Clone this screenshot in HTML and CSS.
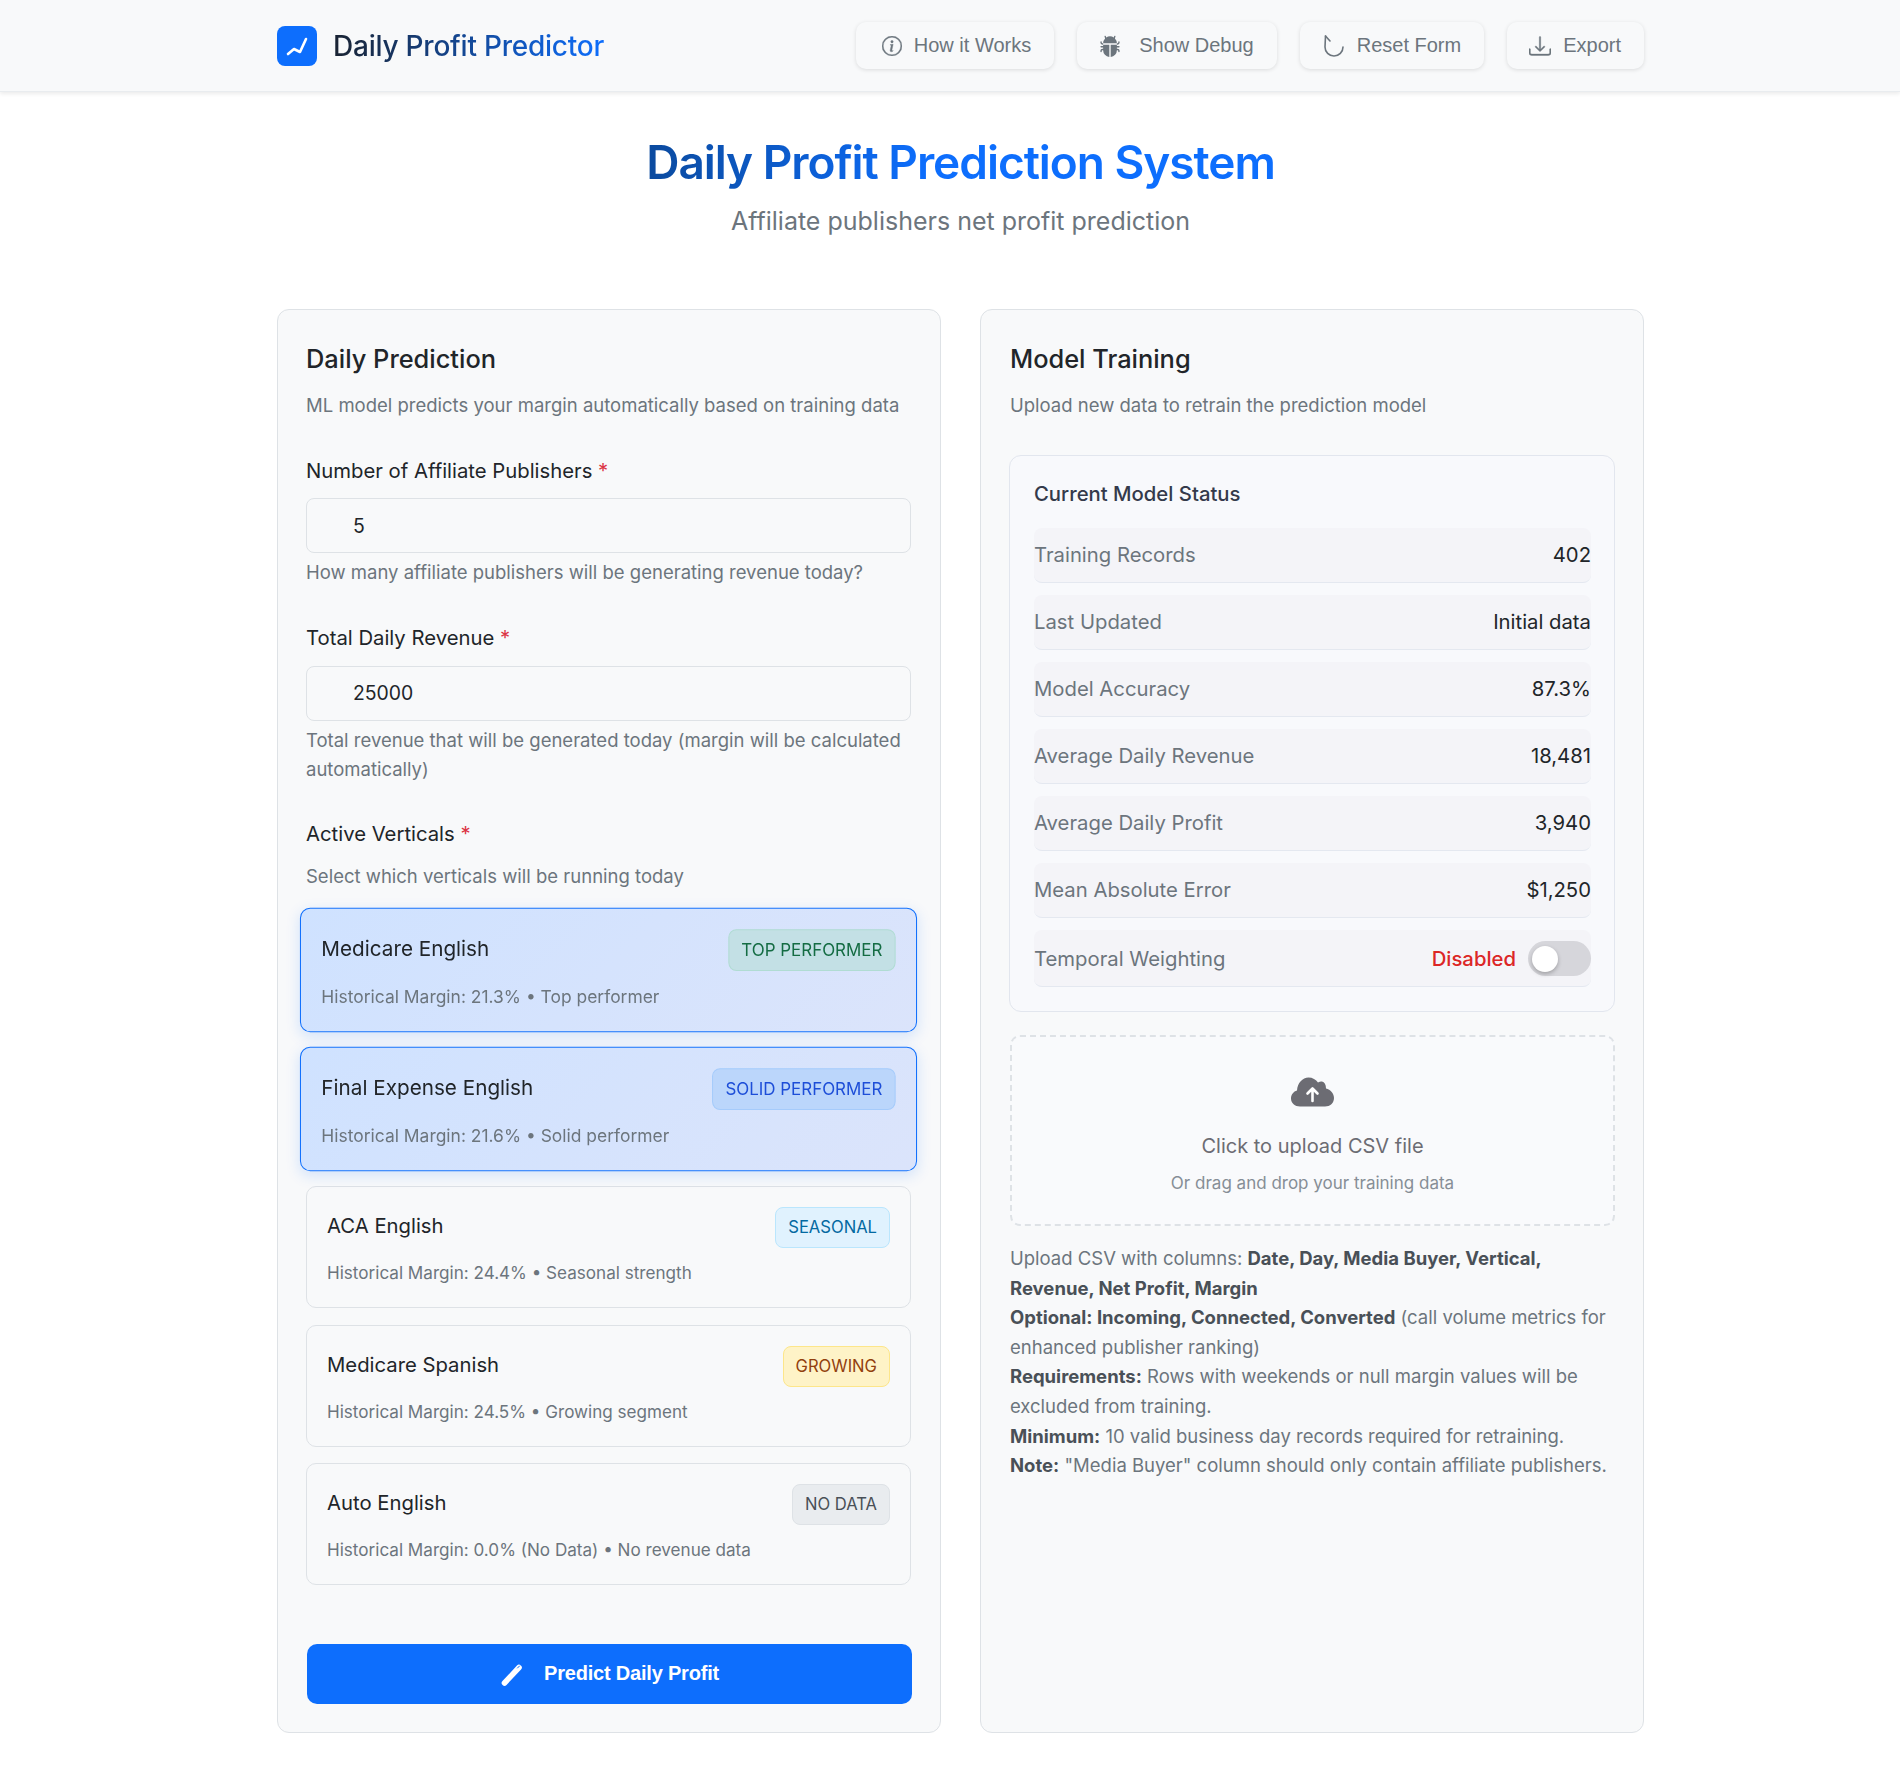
FILE: index.html
```html
<!DOCTYPE html>
<html>
<head>
  <meta charset="UTF-8">
  <title>Daily Profit Predictor</title>
  <link rel="stylesheet" href="styles.css">
</head>
<body>

  <header class="topbar">
    <div class="topbar-inner">
      <div class="brand">
        <span class="brand-icon">
          <svg viewBox="0 0 40 40" width="40" height="40" fill="none" stroke="#fff" stroke-width="2.6" stroke-linecap="round" stroke-linejoin="round"><path d="M11 28 L17 23 L23 26 L29 13"/></svg>
        </span>
        <span class="brand-name">Daily Profit Predictor</span>
      </div>
      <nav class="top-actions">
        <button class="top-btn btn-how">
          <svg viewBox="0 0 16 16" width="20" height="20" fill="currentColor" stroke="currentColor" stroke-width=".3"><path d="M8 15A7 7 0 1 1 8 1a7 7 0 0 1 0 14zm0 1A8 8 0 1 0 8 0a8 8 0 0 0 0 16z"/><path d="m8.93 6.588-2.29.287-.082.38.45.083c.294.07.352.176.288.469l-.738 3.468c-.194.897.105 1.319.808 1.319.545 0 1.178-.252 1.465-.598l.088-.416c-.2.176-.492.246-.686.246-.275 0-.375-.193-.304-.533L8.93 6.588zM9 4.5a1 1 0 1 1-2 0 1 1 0 0 1 2 0z"/></svg>
          How it Works
        </button>
        <button class="top-btn btn-debug">
          <svg viewBox="0 0 16 16" width="22" height="22" fill="currentColor"><path d="M4.978.855a.5.5 0 1 0-.956.29l.41 1.352A4.985 4.985 0 0 0 3 6h10a4.985 4.985 0 0 0-1.432-3.503l.41-1.352a.5.5 0 1 0-.956-.29l-.291.956A4.978 4.978 0 0 0 8 1a4.979 4.979 0 0 0-2.731.811l-.29-.956z"/><path d="M13 6v1H8.5v8.975A5 5 0 0 0 13 11h.5a.5.5 0 0 1 .5.5v.5a.5.5 0 1 0 1 0v-.5a1.5 1.5 0 0 0-1.5-1.5H13V9h1.5a.5.5 0 0 0 0-1H13V7h.5A1.5 1.5 0 0 0 15 5.5V5a.5.5 0 0 0-1 0v.5a.5.5 0 0 1-.5.5H13zm-5.5 9.975V7H3V6h-.5a.5.5 0 0 1-.5-.5V5a.5.5 0 0 0-1 0v.5A1.5 1.5 0 0 0 2.5 7H3v1H1.5a.5.5 0 0 0 0 1H3v1h-.5A1.5 1.5 0 0 0 1 11.5v.5a.5.5 0 1 0 1 0v-.5a.5.5 0 0 1 .5-.5H3a5 5 0 0 0 4.500 4.975z"/></svg>
          Show Debug
        </button>
        <button class="top-btn">
          <svg viewBox="0 0 22 24" width="22" height="24" fill="none" stroke="currentColor" stroke-width="1.6" stroke-linecap="round"><path d="M2.500 2 L2 13 A9 9 0 0 0 20 13"/><path d="M2.500 2 L7 7"/></svg>
          Reset Form
        </button>
        <button class="top-btn btn-export">
          <svg viewBox="0 0 16 16" width="22" height="22" fill="currentColor" stroke="currentColor" stroke-width=".3"><path d="M.5 9.9a.5.5 0 0 1 .5.5v2.5a1 1 0 0 0 1 1h12a1 1 0 0 0 1-1v-2.5a.5.5 0 0 1 1 0v2.5a2 2 0 0 1-2 2H2a2 2 0 0 1-2-2v-2.5a.5.5 0 0 1 .5-.5z"/><path d="M7.646 11.854a.5.5 0 0 0 .708 0l3-3a.5.5 0 0 0-.708-.708L8.5 10.293V1.5a.5.5 0 0 0-1 0v8.793L5.354 8.146a.5.5 0 1 0-.708.708l3 3z"/></svg>
          Export
        </button>
      </nav>
    </div>
  </header>

  <main class="page">
    <section class="hero">
      <h1>Daily Profit Prediction System</h1>
      <p>Affiliate publishers net profit prediction</p>
    </section>

    <div class="columns">
      <section class="card">
        <h2>Daily Prediction</h2>
        <p class="card-sub">ML model predicts your margin automatically based on training data</p>

        <div class="field">
          <label>Number of Affiliate Publishers <span class="req">*</span></label>
          <input class="text-input" type="text" value="5">
          <p class="help">How many affiliate publishers will be generating revenue today?</p>
        </div>

        <div class="field">
          <label>Total Daily Revenue <span class="req">*</span></label>
          <input class="text-input" type="text" value="25000">
          <p class="help">Total revenue that will be generated today (margin will be calculated automatically)</p>
        </div>

        <div class="field-verticals">
          <label>Active Verticals <span class="req">*</span></label>
          <p class="help verticals-help">Select which verticals will be running today</p>
        </div>

        <div class="verticals">
          <div class="vertical selected">
            <div class="vertical-top"><span class="vertical-name">Medicare English</span><span class="tag tag-top">TOP PERFORMER</span></div>
            <div class="vertical-meta">Historical Margin: 21.3% • Top performer</div>
          </div>
          <div class="vertical selected">
            <div class="vertical-top"><span class="vertical-name">Final Expense English</span><span class="tag tag-solid">SOLID PERFORMER</span></div>
            <div class="vertical-meta">Historical Margin: 21.6% • Solid performer</div>
          </div>
          <div class="vertical">
            <div class="vertical-top"><span class="vertical-name">ACA English</span><span class="tag tag-seasonal">SEASONAL</span></div>
            <div class="vertical-meta">Historical Margin: 24.4% • Seasonal strength</div>
          </div>
          <div class="vertical">
            <div class="vertical-top"><span class="vertical-name">Medicare Spanish</span><span class="tag tag-growing">GROWING</span></div>
            <div class="vertical-meta">Historical Margin: 24.5% • Growing segment</div>
          </div>
          <div class="vertical">
            <div class="vertical-top"><span class="vertical-name">Auto English</span><span class="tag tag-none">NO DATA</span></div>
            <div class="vertical-meta">Historical Margin: 0.0% (No Data) • No revenue data</div>
          </div>
        </div>

        <button class="predict-btn">
          <svg viewBox="0 0 24 24" width="24" height="24" fill="none" stroke-linecap="round"><path d="M4.500 21 L19 5.500" stroke="#fff" stroke-width="5.600"/><path d="M17.500 6 L19.500 4" stroke="#0d6efd" stroke-width="1"/></svg>
          Predict Daily Profit
        </button>
      </section>

      <section class="card card-right">
        <h2>Model Training</h2>
        <p class="card-sub">Upload new data to retrain the prediction model</p>

        <div class="status">
          <h3>Current Model Status</h3>
          <div class="status-row"><span>Training Records</span><b>402</b></div>
          <div class="status-row"><span>Last Updated</span><b>Initial data</b></div>
          <div class="status-row"><span>Model Accuracy</span><b>87.3%</b></div>
          <div class="status-row"><span>Average Daily Revenue</span><b>18,481</b></div>
          <div class="status-row"><span>Average Daily Profit</span><b>3,940</b></div>
          <div class="status-row"><span>Mean Absolute Error</span><b>$1,250</b></div>
          <div class="status-row status-toggle">
            <span>Temporal Weighting</span>
            <div class="toggle-wrap"><b class="off">Disabled</b><span class="toggle"></span></div>
          </div>
        </div>

        <div class="upload">
          <svg viewBox="0 0 43 30" width="43" height="30"><path fill="#6c6c73" d="M9 29.500 C4 29.500 0 26 0 21.500 C0 17.500 2.500 14.500 6 13.500 C6.500 6 11.500 .5 17.500 .5 C21.500 .5 25 2.500 27 5.500 C28.500 4.500 30 4.200 31 4.500 C33.500 5 35 7.500 35 11.500 C39.500 12.500 43 16.500 43 21 C43 26 39 29.500 34 29.500 Z"/><path fill="none" stroke="#fff" stroke-width="2.600" stroke-linecap="round" stroke-linejoin="round" d="M21.500 24 V11.500 M16.500 16.500 L21.500 11.500 L26.500 16.500"/></svg>
          <div class="upload-title">Click to upload CSV file</div>
          <div class="upload-sub">Or drag and drop your training data</div>
        </div>

        <p class="notes">
          Upload CSV with columns: <b>Date, Day, Media Buyer, Vertical, Revenue, Net Profit, Margin</b><br>
          <b>Optional: Incoming, Connected, Converted</b> (call volume metrics for enhanced publisher ranking)<br>
          <b>Requirements:</b> Rows with weekends or null margin values will be excluded from training.<br>
          <b>Minimum:</b> 10 valid business day records required for retraining.<br>
          <b>Note:</b> "Media Buyer" column should only contain affiliate publishers.
        </p>
      </section>
    </div>
  </main>

</body>
</html>
```

FILE: styles.css
```css
* { box-sizing: border-box; }
html, body { margin: 0; padding: 0; }
body { font-family: Inter, "Liberation Sans", sans-serif; background: #fff; color: #212529; font-size: 18.5px; }

.topbar { height: 92px; background: #f8f9fa; border-bottom: 1px solid #e9ecef; box-shadow: 0 2px 4px rgba(0,0,0,0.08); }
.topbar-inner { height: 100%; margin-left: 277px; width: 1367px; display: flex; align-items: center; justify-content: space-between; }
.brand { display: flex; align-items: center; gap: 16px; }
.brand-icon { width: 40px; height: 40px; border-radius: 8px; background: #0d6efd; display: flex; }
.brand-name { font-size: 28px; font-weight: 500; letter-spacing: -0.23px; background: linear-gradient(90deg, #1a2332 0%, #0d6efd 100%); -webkit-background-clip: text; background-clip: text; color: transparent; }
.top-actions { display: flex; gap: 23px; }
.top-btn { height: 47px; padding: 0 23px; border: 0; border-radius: 10px; background: #f8f9fa; color: #6c757d; font-family: "Liberation Sans", Arial, sans-serif; font-size: 20px; display: flex; align-items: center; gap: 12px; box-shadow: 0 1px 4px rgba(0,0,0,0.12); }
.btn-how { padding-left: 26px; }
.btn-debug { gap: 18px; padding-left: 22px; }
.btn-export { padding-left: 22px; }

.page { margin-left: 277px; width: 1367px; padding-bottom: 46px; }
.hero { text-align: center; padding-top: 35px; height: 217px; }
.hero h1 { display: inline-block; margin: 0; font-size: 46px; line-height: 70px; font-weight: 600; letter-spacing: -1.05px; background: linear-gradient(90deg, #0b4a9e 0%, #0d6efd 45%); -webkit-background-clip: text; background-clip: text; color: transparent; }
.hero p { margin: 6px 0 0; font-size: 25px; line-height: 36px; color: #6c757d; }

.columns { display: grid; grid-template-columns: 1fr 1fr; gap: 39px; }
.card { background: #f8f9fa; border: 1px solid #dee2e6; border-radius: 12px; padding: 30px 29px 30px 28px; height: 1424px; }
.card-right { padding-left: 29px; }
.card h2 { margin: 0; font-size: 25.4px; line-height: 38px; font-weight: 500; color: #212529; }
.card-sub { margin: 13px 0 0; font-size: 18.5px; line-height: 29px; color: #6c757d; }

.field { margin-top: 36px; }
.field + .field { margin-top: 35px; }
label { display: block; font-size: 20.3px; line-height: 30px; color: #212529; margin-bottom: 12px; }
.field + .field label { margin-bottom: 13px; }
.req { color: #dc3545; }
.text-input { display: block; width: 100%; height: 55px; padding: 0 46px; border: 1px solid #dee2e6; border-radius: 8px; background: #f8f9fa; font: 19.4px Inter, sans-serif; color: #212529; outline: none; }
.help { margin: 5px 0 0; font-size: 18.5px; line-height: 29.6px; color: #6c757d; }
.field-verticals { margin-top: 34px; }
.verticals-help { margin-top: 0; }
.field-verticals label { margin-bottom: 13px; }

.verticals { margin-top: 18px; display: flex; flex-direction: column; gap: 16.4px; }
.vertical { height: 122px; padding: 20px; border: 1px solid #dee2e6; border-radius: 10px; background: #f8f9fa; }
.vertical.selected { border-color: #0d6efd; background: linear-gradient(135deg, #cfe2ff, #dbe4fb); transform: scale(1.02); box-shadow: 0 4px 14px rgba(13,110,253,0.15); }
.vertical-top { display: flex; justify-content: space-between; align-items: flex-start; height: 41px; }
.vertical-name { font-size: 20.3px; line-height: 38px; color: #212529; }
.tag { height: 41px; padding: 0 12px; border-radius: 8px; border: 1px solid; font-size: 16.6px; line-height: 39px; }
.tag-top { background: #c3e0e5; border-color: #b0dcd3; color: #146c43; }
.tag-solid { background: #bbd6fb; border-color: #a5cbfb; color: #1d4ed8; }
.tag-seasonal { background: #e0f2fe; border-color: #bae6fd; color: #0369a1; }
.tag-growing { background: #fef3c7; border-color: #fde68a; color: #92400e; }
.tag-none { background: #e9ecef; border-color: #dee2e6; color: #495057; }
.vertical-meta { margin-top: 11px; font-size: 17.1px; line-height: 28px; color: #6c757d; }

.predict-btn { margin: 59px 0 0 1px; width: 100%; height: 60px; border: 0; border-radius: 10px; background: #0d6efd; color: #fff; font-family: "Liberation Sans", Arial, sans-serif; font-size: 20px; letter-spacing: -0.2px; font-weight: 700; display: flex; align-items: center; justify-content: center; gap: 20px; }

.status { margin: 35px -1px 0 -1px; height: 557px; padding: 0 23px 0 24px; border: 1px solid #e2e6ee; border-radius: 12px; background: #f8f9fc; }
.status h3 { margin: 0; padding-top: 23px; height: 72px; font-size: 20.3px; line-height: 30px; font-weight: 500; color: #343a4b; }
.status-row { height: 55px; margin-bottom: 12px; padding-bottom: 2px; display: flex; align-items: center; justify-content: space-between; background: #f4f4f8; border-bottom: 1px solid #e4e8f0; border-radius: 8px; font-size: 20.3px; color: #6c757d; }
.status-row b { font-weight: 400; color: #212529; }
.status-toggle { height: 57px; padding-bottom: 0; }
.toggle-wrap { display: flex; align-items: center; gap: 12px; }
.status-row b.off { color: #dc2626; font-weight: 500; }
.toggle { width: 63px; height: 35px; border-radius: 18px; background: #d6d6db; position: relative; }
.toggle::before { content: ""; position: absolute; left: 4px; top: 5px; width: 26px; height: 26px; border-radius: 50%; background: #fff; box-shadow: 0 2px 4px rgba(0,0,0,0.25); }

.upload { margin: 23px -1px 0 0; height: 191px; border: 2px dashed #dee2e6; border-radius: 10px; background: #f9fafc; display: flex; flex-direction: column; align-items: center; padding-top: 40px; }
.upload-title { margin-top: 24px; font-size: 20px; line-height: 30px; color: #6c6c73; }
.upload-sub { margin-top: 9px; font-size: 17px; line-height: 26px; color: #868e96; }
.notes { margin: 18px 0 0; font-size: 18.5px; line-height: 29.6px; color: #6c757d; }
.notes b { font-weight: 700; color: #495057; }
```
